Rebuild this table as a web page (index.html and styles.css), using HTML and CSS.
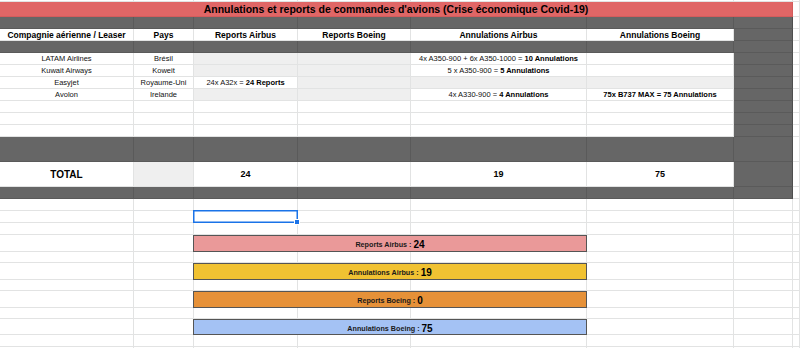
FILE: index.html
```html
<!DOCTYPE html>
<html lang="fr">
<head>
    <meta charset="UTF-8">
    <meta name="viewport" content="width=device-width, initial-scale=1.0">
    <title>Annulations et reports de commandes d'avions</title>
    <link rel="stylesheet" href="styles.css">
</head>
<body>
    <div class="sheet">
        <!-- partial top row -->
        <div class="c"></div><div class="c"></div><div class="c"></div><div class="c"></div><div class="c"></div><div class="c"></div><div class="c"></div><div class="c"></div>

        <!-- title -->
        <div class="c title">Annulations et reports de commandes d'avions (Crise économique Covid-19)</div><div class="c"></div>

        <div class="c dk"></div><div class="c dk"></div><div class="c dk"></div><div class="c dk"></div><div class="c dk"></div><div class="c dk"></div><div class="c dk edge"></div><div class="c"></div>

        <!-- headers -->
        <div class="c hd">Compagnie aérienne / Leaser</div>
        <div class="c hd">Pays</div>
        <div class="c hd">Reports Airbus</div>
        <div class="c hd">Reports Boeing</div>
        <div class="c hd">Annulations Airbus</div>
        <div class="c hd">Annulations Boeing</div>
        <div class="c dk edge"></div><div class="c"></div>

        <div class="c dk"></div><div class="c dk"></div><div class="c dk"></div><div class="c dk"></div><div class="c dk"></div><div class="c dk"></div><div class="c dk edge"></div><div class="c"></div>

        <!-- data -->
        <div class="c">LATAM Airlines</div>
        <div class="c">Brésil</div>
        <div class="c gray"></div>
        <div class="c gray"></div>
        <div class="c">4x A350-900 + 6x A350-1000 = <b>&nbsp;10 Annulations</b></div>
        <div class="c"></div>
        <div class="c dk edge"></div><div class="c"></div>

        <div class="c">Kuwait Airways</div>
        <div class="c">Koweit</div>
        <div class="c gray"></div>
        <div class="c gray"></div>
        <div class="c">5 x A350-900 = <b>&nbsp;5 Annulations</b></div>
        <div class="c"></div>
        <div class="c dk edge"></div><div class="c"></div>

        <div class="c">Easyjet</div>
        <div class="c">Royaume-Uni</div>
        <div class="c">24x A32x = <b>&nbsp;24 Reports</b></div>
        <div class="c gray"></div>
        <div class="c gray"></div>
        <div class="c gray"></div>
        <div class="c dk edge"></div><div class="c"></div>

        <div class="c">Avolon</div>
        <div class="c">Irelande</div>
        <div class="c gray"></div>
        <div class="c gray"></div>
        <div class="c">4x A330-900 = <b>&nbsp;4 Annulations</b></div>
        <div class="c"><b>75x B737 MAX = 75 Annulations</b></div>
        <div class="c dk edge"></div><div class="c"></div>

        <div class="c"></div><div class="c"></div><div class="c"></div><div class="c"></div><div class="c"></div><div class="c"></div><div class="c dk edge"></div><div class="c"></div>
        <div class="c"></div><div class="c"></div><div class="c"></div><div class="c"></div><div class="c"></div><div class="c"></div><div class="c dk edge"></div><div class="c"></div>
        <div class="c"></div><div class="c"></div><div class="c"></div><div class="c"></div><div class="c"></div><div class="c"></div><div class="c dk edge"></div><div class="c"></div>

        <div class="c dk"></div><div class="c dk"></div><div class="c dk"></div><div class="c dk"></div><div class="c dk"></div><div class="c dk"></div><div class="c dk edge"></div><div class="c"></div>

        <!-- totals -->
        <div class="c total">TOTAL</div>
        <div class="c gray"></div>
        <div class="c num">24</div>
        <div class="c"></div>
        <div class="c num">19</div>
        <div class="c num">75</div>
        <div class="c dk edge"></div><div class="c"></div>

        <div class="c dk"></div><div class="c dk"></div><div class="c dk"></div><div class="c dk"></div><div class="c dk"></div><div class="c dk"></div><div class="c dk edge"></div><div class="c"></div>

        <!-- summary area -->
        <div class="c"></div><div class="c"></div><div class="c"></div><div class="c"></div><div class="c"></div><div class="c"></div><div class="c"></div><div class="c"></div>
        <div class="c"></div><div class="c"></div><div class="c selected"></div><div class="c"></div><div class="c"></div><div class="c"></div><div class="c"></div><div class="c"></div>
        <div class="c"></div><div class="c"></div><div class="c"></div><div class="c"></div><div class="c"></div><div class="c"></div><div class="c"></div><div class="c"></div>

        <div class="c"></div><div class="c"></div>
        <div class="c bar bar-reports-airbus">Reports Airbus :&nbsp;<span class="big">24</span></div>
        <div class="c"></div><div class="c"></div><div class="c"></div>
        <div class="c"></div><div class="c"></div><div class="c"></div><div class="c"></div><div class="c"></div><div class="c"></div><div class="c"></div><div class="c"></div>

        <div class="c"></div><div class="c"></div>
        <div class="c bar bar-annul-airbus">Annulations Airbus :&nbsp;<span class="big">19</span></div>
        <div class="c"></div><div class="c"></div><div class="c"></div>
        <div class="c"></div><div class="c"></div><div class="c"></div><div class="c"></div><div class="c"></div><div class="c"></div><div class="c"></div><div class="c"></div>

        <div class="c"></div><div class="c"></div>
        <div class="c bar bar-reports-boeing">Reports Boeing :&nbsp;<span class="big">0</span></div>
        <div class="c"></div><div class="c"></div><div class="c"></div>
        <div class="c"></div><div class="c"></div><div class="c"></div><div class="c"></div><div class="c"></div><div class="c"></div><div class="c"></div><div class="c"></div>

        <div class="c"></div><div class="c"></div>
        <div class="c bar bar-annul-boeing">Annulations Boeing :&nbsp;<span class="big">75</span></div>
        <div class="c"></div><div class="c"></div><div class="c"></div>
        <div class="c"></div><div class="c"></div><div class="c"></div><div class="c"></div><div class="c"></div><div class="c"></div><div class="c"></div><div class="c"></div>
        <div class="c"></div><div class="c"></div><div class="c"></div><div class="c"></div><div class="c"></div><div class="c"></div><div class="c"></div><div class="c"></div>
    </div>
</body>
</html>
```

FILE: styles.css
```css
* {
    margin: 0;
    padding: 0;
    box-sizing: border-box;
}

body {
    background-color: #ffffff;
    font-family: 'Liberation Sans', Arial, sans-serif;
    overflow: hidden;
}

.sheet {
    display: grid;
    grid-template-columns: 134px 60px 104px 113px 176px 147px 59px 1fr;
    grid-template-rows:
        2px 15px 12px 12px 12px
        repeat(7, 12px)
        25px 25px 12px
        12px 12px 12px
        17px 11px 17px 11px 17px 11px 16px 12px 12px;
    font-size: 7.5px;
    color: #111111;
}

.c {
    display: flex;
    align-items: center;
    justify-content: center;
    white-space: nowrap;
    border-right: 1px solid #e2e3e3;
    border-bottom: 1px solid #e2e3e3;
}

.c b {
    font-weight: 700;
    color: #000000;
}

.title {
    grid-column: span 7;
    background-color: #e06666;
    border-color: #d45c5c;
    font-size: 10.5px;
    font-weight: 700;
    color: #000000;
}

.hd {
    font-size: 8.5px;
    font-weight: 700;
    color: #000000;
}

.dk {
    background-color: #666666;
    border-color: #5a5a5a;
}

.dk.edge {
    border-right-color: #4e4e4e;
}

.gray {
    background-color: #efefef;
}

.total {
    font-size: 10px;
    font-weight: 700;
    color: #000000;
}

.num {
    font-size: 9px;
    font-weight: 700;
    color: #000000;
}

/* Selected cell outline */
.selected {
    position: relative;
}

.selected::before {
    content: '';
    position: absolute;
    top: -1px;
    left: -1px;
    right: -1px;
    bottom: -1px;
    border: 1px solid #1a73e8;
    box-shadow: inset 0 0 0 0.5px #1a73e8;
}

.selected::after {
    content: '';
    position: absolute;
    right: -3px;
    bottom: -3px;
    width: 4px;
    height: 4px;
    background-color: #1a73e8;
    border: 1px solid #ffffff;
}

/* Summary bars */
.bar {
    grid-column: span 3;
    border: 1px solid #555555;
    margin-left: -1px;
    padding-top: 2px;
    font-size: 7.2px;
    font-weight: 700;
    color: #1a1a1a;
}

.bar .big {
    font-size: 10px;
    color: #000000;
}

.bar-reports-airbus {
    background-color: #ea9999;
}

.bar-annul-airbus {
    background-color: #f1c232;
}

.bar-reports-boeing {
    background-color: #e69138;
}

.bar-annul-boeing {
    background-color: #a4c2f4;
}
```
